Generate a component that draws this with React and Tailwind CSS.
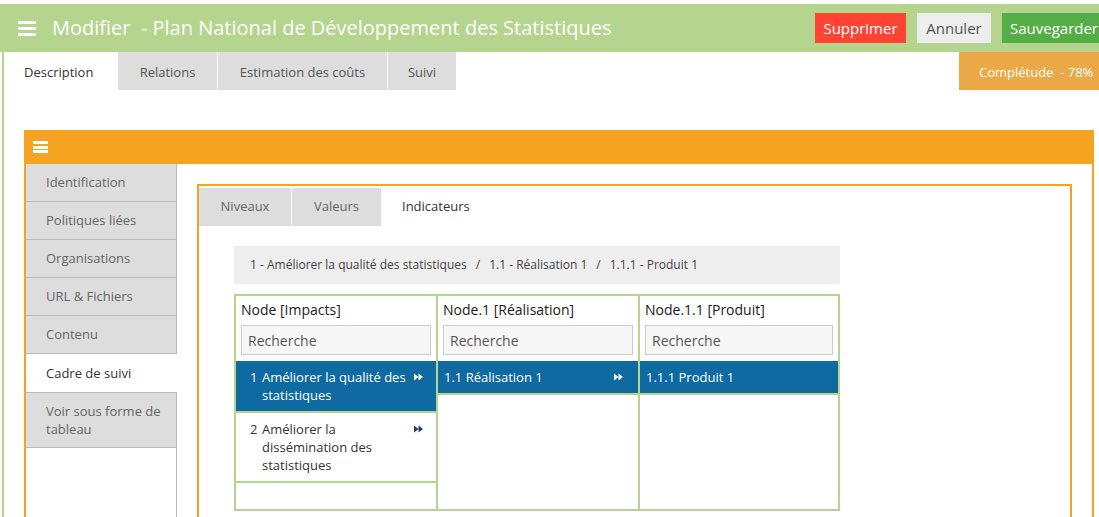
import React from 'react';

const GREEN = 'border-[#b5d48d]';

function FastForward({ light }) {
  return (
    <svg width="9" height="8" viewBox="0 0 9 8" className={light ? 'text-white' : 'text-[#1d3a66]'}>
      <polygon points="0,0.5 4.5,4 0,7.5" fill="currentColor" />
      <polygon points="4.5,0.5 9,4 4.5,7.5" fill="currentColor" />
    </svg>
  );
}

function Burger({ bar, gap, width }) {
  return (
    <div className={`flex flex-col ${gap} ${width}`}>
      <span className={`block ${bar} bg-white`}></span>
      <span className={`block ${bar} bg-white`}></span>
      <span className={`block ${bar} bg-white`}></span>
    </div>
  );
}

function Row({ num, label, selected, arrow, numW, pl, pr }) {
  return (
    <div
      className={`flex items-start py-[7px] leading-[18px] text-[13px] border-b-2 ${GREEN} ${pl} ${pr} ${
        selected ? 'bg-[#0e6aa1] text-white' : 'bg-white text-[#333]'
      }`}
    >
      <span className={`shrink-0 ${numW}`}>{num}</span>
      <span className="flex-1">{label}</span>
      {arrow && (
        <span className="ml-[8px] h-[18px] flex items-center shrink-0">
          <FastForward light={selected} />
        </span>
      )}
    </div>
  );
}

function Column({ title, width, border, children }) {
  return (
    <div className={`${width} ${border ? `border-l-2 ${GREEN}` : ''} flex flex-col`}>
      <div className="px-[5px] pt-[4px] text-[14px] leading-[20px] font-medium text-[#1a1a1a]">{title}</div>
      <div className="mx-[5px] mt-[5px] h-[30px] border border-[#cccccc] bg-[#f7f7f7] px-[6px] flex items-center text-[14px] text-[#555]">
        Recherche
      </div>
      <div className="mt-[6px]">{children}</div>
    </div>
  );
}

export default function App() {
  const sideItems = [
    'Identification',
    'Politiques liées',
    'Organisations',
    'URL & Fichiers',
    'Contenu',
  ];

  return (
    <div className="w-[1099px] h-[517px] overflow-hidden bg-white pt-1 font-['Open_Sans',sans-serif]">
      {/* Header */}
      <header className="h-12 bg-[#b5d48d] flex items-center pl-[18px]">
        <Burger bar="h-[3px]" gap="gap-[3px]" width="w-[18px]" />
        <h1 className="ml-4 text-[20px] text-white whitespace-pre">Modifier  - Plan National de Développement des Statistiques</h1>
        <div className="ml-auto mr-[-7px] self-start mt-[9px] flex gap-[11px] text-[15px]">
          <button className="w-[91px] h-[30px] bg-[#ff4433] text-white">Supprimer</button>
          <button className="w-[74px] h-[30px] bg-[#eeeeee] text-[#555]">Annuler</button>
          <button className="w-[104px] h-[30px] bg-[#55ad45] text-white">Sauvegarder</button>
        </div>
      </header>

      <div className={`ml-[2px] border-l-2 ${GREEN} h-[480px]`}>
        {/* Top tabs */}
        <div className="flex h-[38px] text-[13px] leading-[20px]">
          <div className="w-[114px] pl-[20px] pt-[10px] text-[#333] bg-white">Description</div>
          <div className="w-[99px] pt-[10px] text-center bg-[#dddddd] text-[#555]">Relations</div>
          <div className="ml-px w-[169px] pt-[10px] text-center bg-[#dddddd] text-[#555]">Estimation des coûts</div>
          <div className="ml-px w-[68px] pt-[10px] text-center bg-[#dddddd] text-[#555]">Suivi</div>
          <div className="ml-auto w-[140px] pl-[20px] pt-[10px] bg-[#eba846] text-white whitespace-pre">Complétude  - 78%</div>
        </div>

        {/* Orange panel */}
        <div className="mt-[40px] ml-[20px] w-[1070px] border-x-2 border-[#f6a321] h-[400px]">
          <div className="h-[34px] bg-[#f6a321] flex items-center pl-[7px]">
            <Burger bar="h-[3px]" gap="gap-[1.5px]" width="w-[15px]" />
          </div>
          <div className="flex">
            {/* Sidebar */}
            <div className="w-[151px] flex flex-col h-[360px] text-[13px]">
              {sideItems.map((item) => (
                <div key={item} className="h-[38px] flex items-center pl-[20px] pt-px bg-[#dddddd] text-[#666] border-b border-r border-[#bbbbbb]">
                  {item}
                </div>
              ))}
              <div className="h-[38px] flex items-center pl-[20px] pt-px bg-white text-[#333]">Cadre de suivi</div>
              <div className="pl-[20px] pr-[10px] py-[9px] leading-[18px] bg-[#dddddd] text-[#666] border-y border-r border-[#bbbbbb]">
                Voir sous forme de tableau
              </div>
              <div className="flex-1 border-r border-[#bbbbbb]"></div>
            </div>

            {/* Inner box */}
            <div className="ml-[20px] mt-[20px] w-[875px] border-2 border-[#f6a321] h-[360px]">
              <div className="flex h-[38px] mt-[2px] text-[13px]">
                <div className="w-[92px] flex items-center justify-center bg-[#dddddd] text-[#666]">Niveaux</div>
                <div className="ml-px w-[89px] flex items-center justify-center bg-[#dddddd] text-[#666]">Valeurs</div>
                <div className="px-[21px] flex items-center text-[#333]">Indicateurs</div>
              </div>

              <div className="pl-[35px] pt-[20px]">
                <div className="w-[606px] h-[38px] bg-[#eeeeee] pl-[16px] flex items-center text-[12px] text-[#444]">
                  <span>1 - Améliorer la qualité des statistiques</span>
                  <span className="mx-[9px]">/</span>
                  <span>1.1 - Réalisation 1</span>
                  <span className="mx-[9px]">/</span>
                  <span>1.1.1 - Produit 1</span>
                </div>

                <div className={`mt-[10px] w-[606px] h-[217px] border-2 ${GREEN} flex`}>
                  <Column title="Node [Impacts]" width="w-[200px]">
                    <Row num="1" label="Améliorer la qualité des statistiques" selected arrow numW="w-[12px]" pl="pl-[14px]" pr="pr-[13px]" />
                    <Row num="2" label="Améliorer la dissémination des statistiques" arrow numW="w-[12px]" pl="pl-[14px]" pr="pr-[13px]" />
                  </Column>
                  <Column title="Node.1 [Réalisation]" width="w-[202px]" border>
                    <Row num="" label="1.1 Réalisation 1" selected arrow numW="w-0" pl="pl-[6px]" pr="pr-[15px]" />
                  </Column>
                  <Column title="Node.1.1 [Produit]" width="w-[200px]" border>
                    <Row num="" label="1.1.1 Produit 1" selected numW="w-0" pl="pl-[6px]" pr="pr-[13px]" />
                  </Column>
                </div>
              </div>
            </div>
          </div>
        </div>
      </div>
    </div>
  );
}
